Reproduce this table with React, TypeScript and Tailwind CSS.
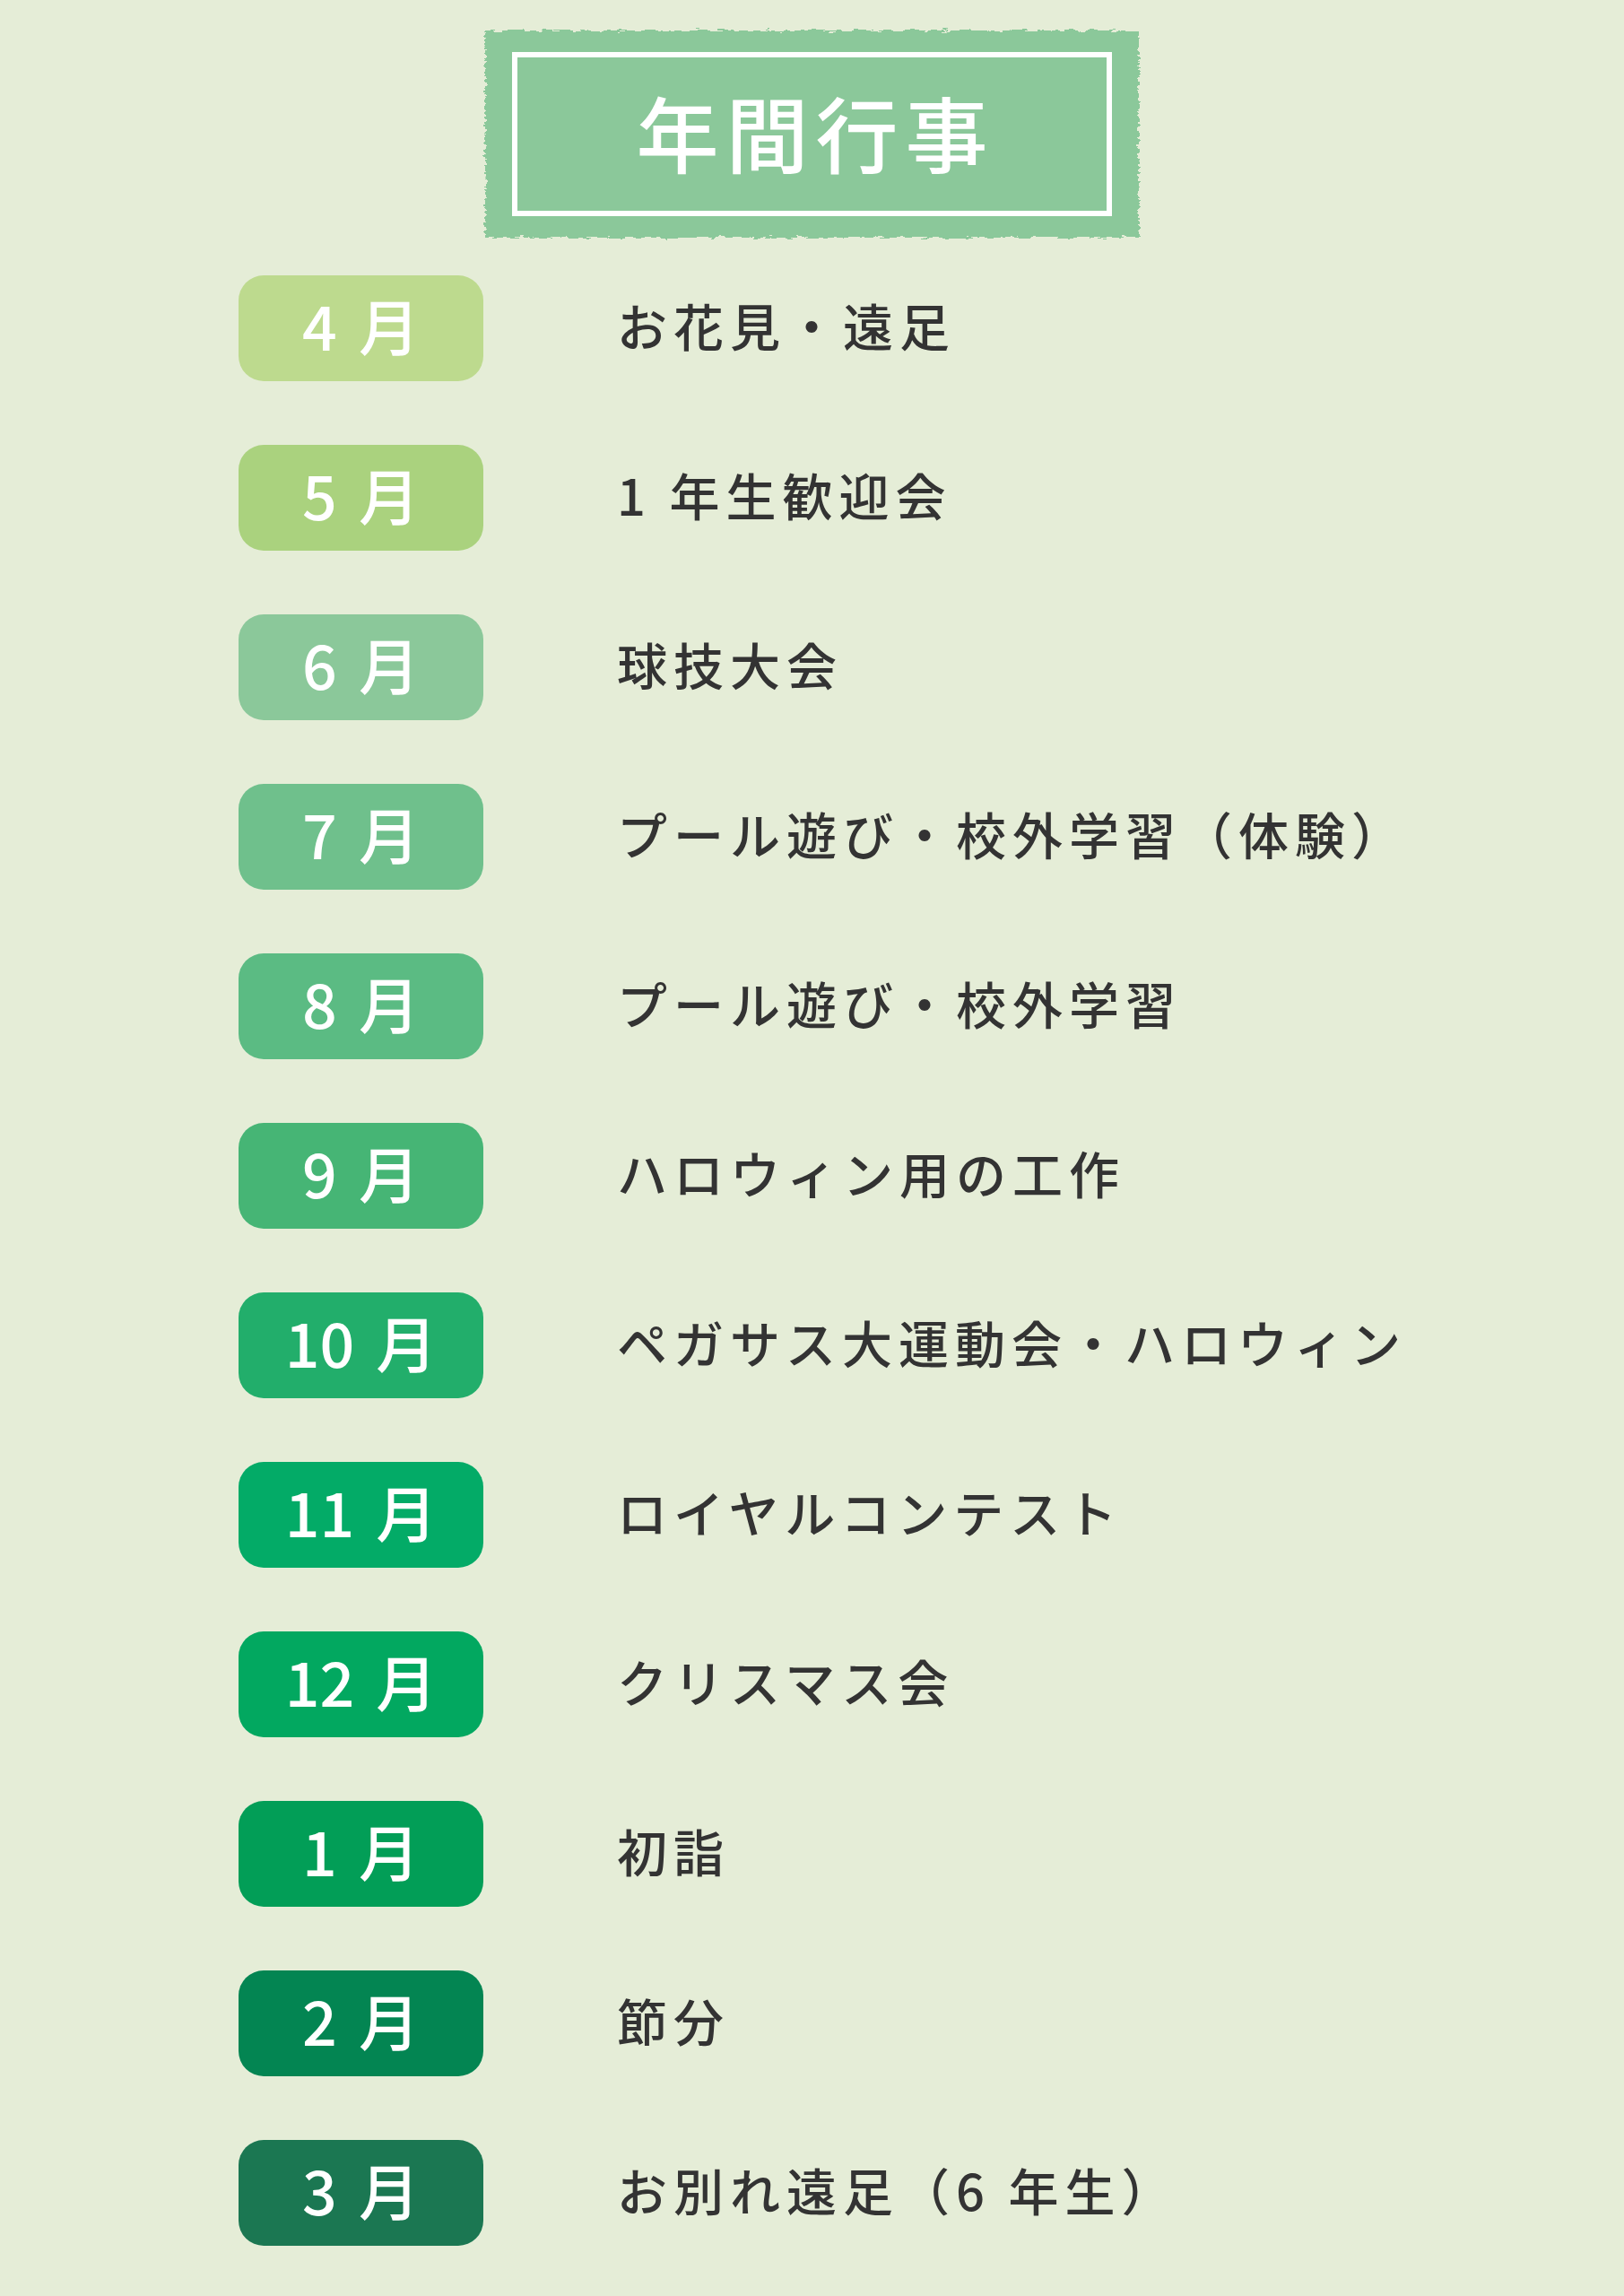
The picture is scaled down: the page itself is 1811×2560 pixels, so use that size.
const EVENTS = [
  { month: "4", label: "お花見・遠足", color: "bg-[#bdda8e]" },
  { month: "5", label: "1 年生歓迎会", color: "bg-[#aad27e]" },
  { month: "6", label: "球技大会", color: "bg-[#8bc89a]" },
  { month: "7", label: "プール遊び・校外学習（体験）", color: "bg-[#6fc08c]" },
  { month: "8", label: "プール遊び・校外学習", color: "bg-[#5bbb83]" },
  { month: "9", label: "ハロウィン用の工作", color: "bg-[#46b575]" },
  { month: "10", label: "ペガサス大運動会・ハロウィン", color: "bg-[#22ae6b]" },
  { month: "11", label: "ロイヤルコンテスト", color: "bg-[#03ab67]" },
  { month: "12", label: "クリスマス会", color: "bg-[#02a860]" },
  { month: "1", label: "初詣", color: "bg-[#029e57]" },
  { month: "2", label: "節分", color: "bg-[#038552]" },
  { month: "3", label: "お別れ遠足（6 年生）", color: "bg-[#1b7752]" },
];

const FONT = "font-['Noto_Sans_CJK_JP','Noto_Sans',sans-serif]";

// brushed-edge background for the title plate
function RoughPlate() {
  return (
    <svg className="absolute inset-0 h-full w-full" viewBox="0 0 737 239" preserveAspectRatio="none">
      <defs>
        <filter id="rough" x="-5%" y="-10%" width="110%" height="120%">
          <feTurbulence type="fractalNoise" baseFrequency="0.08 0.35" numOctaves="3" seed="4" />
          <feDisplacementMap in="SourceGraphic" scale="9" />
        </filter>
      </defs>
      <rect x="4" y="4" width="729" height="231" fill="#8bc89a" filter="url(#rough)" />
    </svg>
  );
}

export default function App() {
  return (
    <div className={`min-h-[2560px] w-full bg-[#e5edd7] ${FONT}`}>
      <div className="flex justify-center pt-[30px]">
        <div className="relative h-[239px] w-[737px]">
          <RoughPlate />
          <div className="absolute inset-x-[34px] inset-y-[28px] flex items-center justify-center border-[6px] border-white pb-[8px]">
            <h1 className="pl-[8px] text-[92px] font-medium leading-none tracking-[8px] text-white">年間行事</h1>
          </div>
        </div>
      </div>

      <div className="flex flex-col gap-[71px] pl-[266px] pt-[38px]">
        {EVENTS.map((e) => (
          <div key={e.month} className="flex items-center gap-[149px]">
            <div
              className={`flex h-[118px] w-[273px] shrink-0 items-center justify-center rounded-[28px] pb-[8px] ${e.color} text-[68px] font-medium leading-none text-white`}
            >
              <span className="pr-[10px]">{e.month}</span>
              <span className="pl-[14px]">月</span>
            </div>
            <p className="-mt-[8px] text-[56px] font-medium leading-none tracking-[7px] text-[#333333]">{e.label}</p>
          </div>
        ))}
      </div>
    </div>
  );
}
